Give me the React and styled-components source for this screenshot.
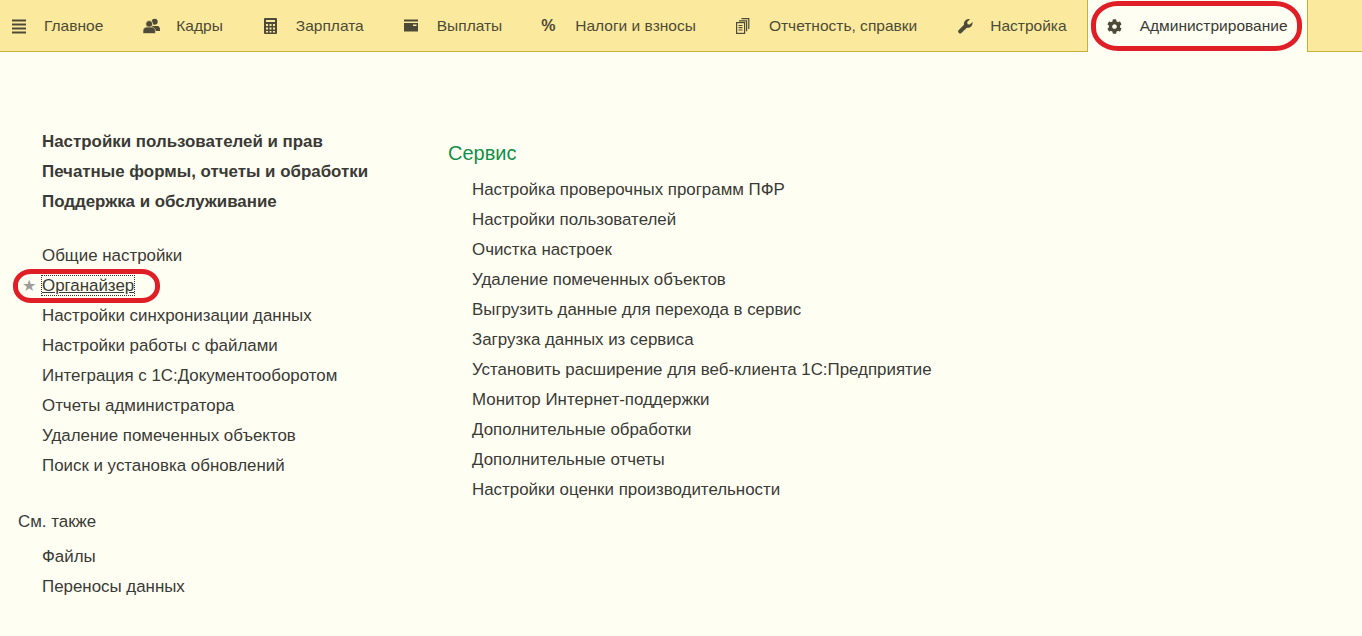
import React from 'react'
import styled, { createGlobalStyle } from 'styled-components'
import { FaCog } from 'react-icons/fa'

const GlobalStyle = createGlobalStyle`
    html, body {
        margin: 0;
        padding: 0;
        background-color: #fffef3;
    }
    body {
        font-family: "Liberation Sans", Arial, sans-serif;
        color: #3a3a36;
    }
`;

const Page = styled.div`
    width: 1362px;
    height: 636px;
    overflow: hidden;
    background-color: #fffef3;
`;

const TopBar = styled.nav`
    display: flex;
    height: 51px;
    padding-left: 11px;
    background-color: #fbea9d;
    border-bottom: 1px solid #c9b137;
`;

const Section = styled.div`
    position: relative;
    display: flex;
    align-items: center;
    padding: 0 20px;
    font-size: 15.53px;
    color: #4e4a38;
    white-space: nowrap;

    &:first-child {
        padding-left: 0;
    }

    ${props => props.active && `
        height: 52px;
        box-sizing: border-box;
        background-color: #fffef3;
        border-left: 1px solid #c9b137;
        border-right: 1px solid #c9b137;
        padding: 0 19px;
        color: #3a3a36;
    `}
`;

const IconBox = styled.span`
    display: flex;
    align-items: center;
    flex-shrink: 0;
    width: 33px;
    font-size: 15px;
    color: #4e4a38;
`;

const Percent = styled.span`
    font-size: 16px;
    font-weight: 700;
    margin-left: -1px;
`;

const MenuIcon = () => (
    <svg width="16" height="16" viewBox="0 0 16 16" fill="currentColor">
        <path d="M1 1.5h14v2H1zM1 5.5h14v2H1zM1 9.5h14v2H1zM1 13.5h14v2H1z" />
    </svg>
);

const UsersIcon = () => (
    <svg width="17" height="16" viewBox="0 0 17 16" fill="currentColor">
        <circle cx="11.7" cy="3.7" r="3" />
        <path d="M8 8h7c1.2.6 2 1.800 2 3.500V13h-6z" />
        <circle cx="6.200" cy="6" r="3.500" stroke="#fbea9d" strokeWidth="0.8" />
        <path d="M0 15.500v-2.500c0-2 1.300-3.500 3-3.900h6.400c1.700.4 3 1.900 3 3.900v2.500z" stroke="#fbea9d" strokeWidth="0.6" />
    </svg>
);

const CalculatorIcon = () => (
    <svg width="15" height="16" viewBox="0 0 15 16" fill="currentColor">
        <path fillRule="evenodd" d="M2 0h11a1 1 0 0 1 1 1v14a1 1 0 0 1-1 1H2a1 1 0 0 1-1-1V1a1 1 0 0 1 1-1zM3 2v2h9V2zM3 6v2h2V6zM6.500 6v2h2V6zM10 6v2h2V6zM3 9.500v2h2v-2zM6.500 9.500v2h2v-2zM10 9.500v2h2v-2zM3 13v1.500h2V13zM6.500 13v1.500h2V13zM10 13v1.500h2V13z" />
    </svg>
);

const CardIcon = () => (
    <svg width="15" height="13" viewBox="0 0 15 13" fill="currentColor">
        <path fillRule="evenodd" d="M0 0.500h14v2H0zM0 4h14v8.500H0zM9 5.500v1.500h3.500V5.500z" />
    </svg>
);

const SheetsIcon = () => (
    <svg width="15" height="16" viewBox="0 0 15 16" fill="none" stroke="currentColor" strokeWidth="1.200">
        <rect x="0.600" y="4.600" width="8" height="10.800" />
        <path d="M2.500 7.500h4M2.500 9.700h4M2.500 12h4" />
        <path d="M3 2.800h7.600v10.400M5.400 0.600h7.400v10.400" />
    </svg>
);

const WrenchIcon = () => (
    <svg width="16" height="16" viewBox="0 0 16 16" fill="currentColor">
        <path d="M1.300 12.400L7 6.700C6.500 3.600 8.800 1 12 1l1 .2L10.200 4l.4 2.200 2.200.4 2.700-2.700c.5 3.600-2.500 6.600-5.600 5.800l-5.800 5.600c-1.100 1-3.800-1.300-2.800-2.900z" />
    </svg>
);

const Oval = styled.span`
    position: absolute;
    top: 1px;
    left: 3px;
    width: 211px;
    height: 50px;
    box-sizing: border-box;
    border: 5px solid #e01e26;
    border-radius: 27px / 23px;
    pointer-events: none;
`;

const Content = styled.main`
    display: flex;
    padding-top: 75px;
`;

const LeftColumn = styled.div`
    width: 448px;
    flex-shrink: 0;
`;

const RightColumn = styled.div`
    padding-top: 11px;
`;

const LinkList = styled.ul`
    list-style: none;
    margin: 0 0 ${props => props.gap || 0}px;
    padding: 0 0 0 ${props => props.indent || 42}px;
`;

const Row = styled.li`
    position: relative;
    height: 30px;
    line-height: 30px;
    font-size: 16.9px;
    font-weight: ${props => props.bold ? 700 : 400};
    color: #3a3a36;
    white-space: nowrap;
`;

const Focused = styled.span`
    outline: 1px dotted #333;
    text-decoration: underline;
`;

const Star = styled.span`
    position: absolute;
    left: -20px;
    top: 0;
    font-family: "DejaVu Sans", sans-serif;
    font-size: 16px;
    color: #9d9d9d;
`;

const RowOval = styled.span`
    position: absolute;
    left: -29px;
    top: -2px;
    width: 147px;
    height: 34px;
    box-sizing: border-box;
    border: 5px solid #e01e26;
    border-radius: 18px / 16px;
    pointer-events: none;
`;

const SeeAlso = styled.div`
    height: 30px;
    line-height: 30px;
    margin-bottom: 5px;
    padding-left: 18px;
    font-size: 16.9px;
    color: #3a3a36;
`;

const GroupTitle = styled.h2`
    margin: 0;
    height: 30px;
    line-height: 30px;
    padding-bottom: 7px;
    font-size: 20px;
    font-weight: 400;
    color: #12904a;
`;

const sections = [
    { title: 'Главное', icon: <MenuIcon /> },
    { title: 'Кадры', icon: <UsersIcon /> },
    { title: 'Зарплата', icon: <CalculatorIcon /> },
    { title: 'Выплаты', icon: <CardIcon /> },
    { title: 'Налоги и взносы', icon: <Percent>%</Percent> },
    { title: 'Отчетность, справки', icon: <SheetsIcon /> },
    { title: 'Настройка', icon: <WrenchIcon /> },
];

const mainLinks = ['Настройки пользователей и прав', 'Печатные формы, отчеты и обработки', 'Поддержка и обслуживание'];
const commands = ['Настройки синхронизации данных', 'Настройки работы с файлами', 'Интеграция с 1С:Документооборотом', 'Отчеты администратора', 'Удаление помеченных объектов', 'Поиск и установка обновлений'];
const seeAlso = ['Файлы', 'Переносы данных'];
const service = [
    'Настройка проверочных программ ПФР',
    'Настройки пользователей',
    'Очистка настроек',
    'Удаление помеченных объектов',
    'Выгрузить данные для перехода в сервис',
    'Загрузка данных из сервиса',
    'Установить расширение для веб-клиента 1С:Предприятие',
    'Монитор Интернет-поддержки',
    'Дополнительные обработки',
    'Дополнительные отчеты',
    'Настройки оценки производительности',
];

function App() {
    return (
        <Page>
            <GlobalStyle />
            <TopBar>
                {sections.map(s => (
                    <Section key={s.title}>
                        <IconBox>{s.icon}</IconBox>
                        {s.title}
                    </Section>
                ))}
                <Section active>
                    <IconBox><FaCog /></IconBox>
                    Администрирование
                    <Oval />
                </Section>
            </TopBar>
            <Content>
                <LeftColumn>
                    <LinkList gap={24}>
                        {mainLinks.map(t => <Row bold key={t}>{t}</Row>)}
                    </LinkList>
                    <LinkList gap={26}>
                        <Row>Общие настройки</Row>
                        <Row>
                            <Star>★</Star>
                            <Focused>Органайзер</Focused>
                            <RowOval />
                        </Row>
                        {commands.map(t => <Row key={t}>{t}</Row>)}
                    </LinkList>
                    <SeeAlso>См. также</SeeAlso>
                    <LinkList>
                        {seeAlso.map(t => <Row key={t}>{t}</Row>)}
                    </LinkList>
                </LeftColumn>
                <RightColumn>
                    <GroupTitle>Сервис</GroupTitle>
                    <LinkList indent={24}>
                        {service.map(t => <Row key={t}>{t}</Row>)}
                    </LinkList>
                </RightColumn>
            </Content>
        </Page>
    )
}

export default App
